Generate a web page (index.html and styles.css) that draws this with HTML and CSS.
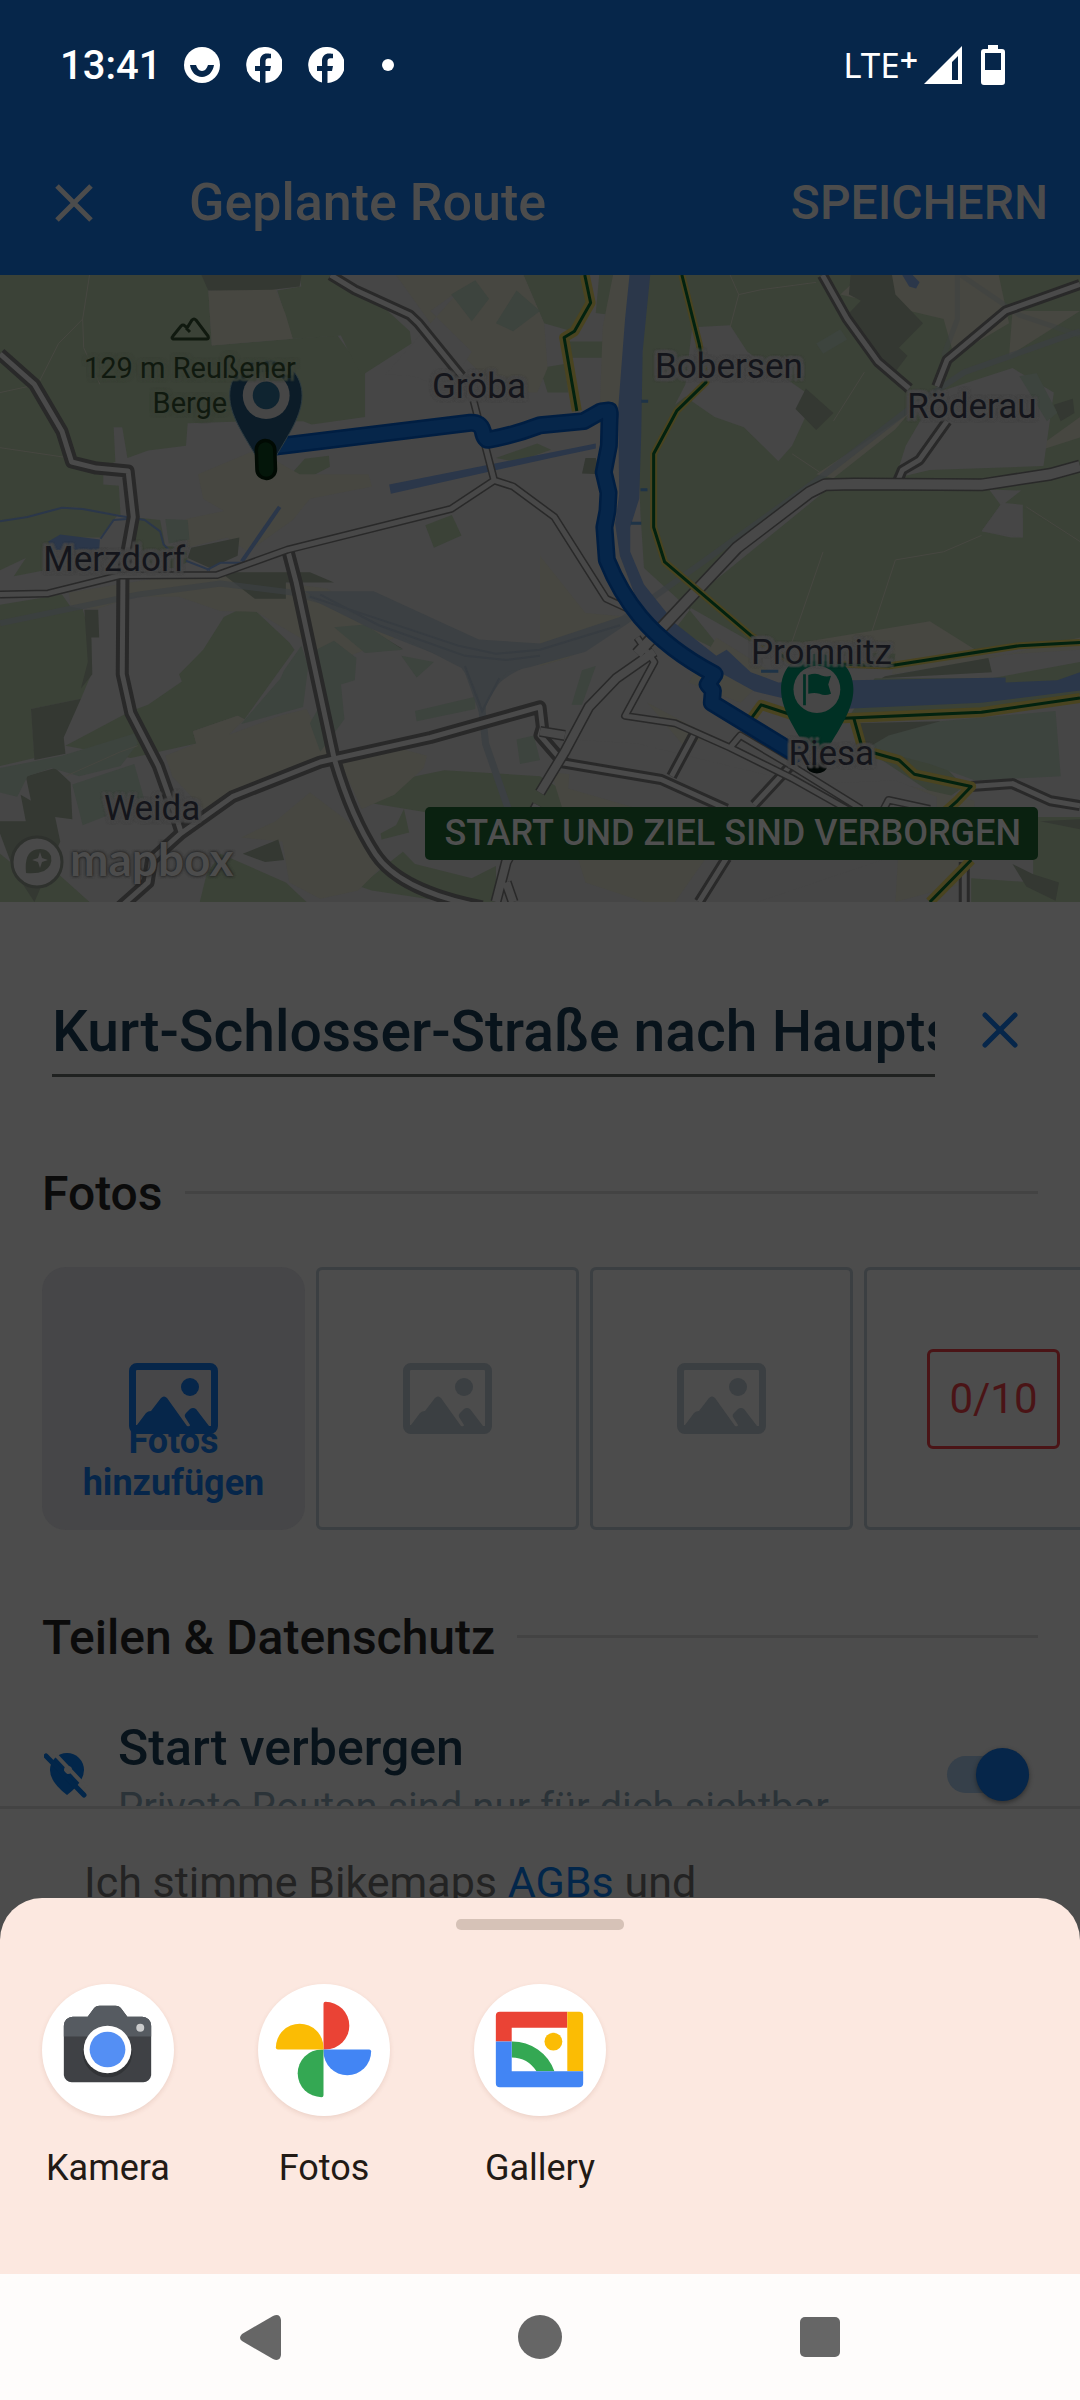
FILE: index.html
```html
<!DOCTYPE html>
<html lang="de">

<head>
    <meta charset="UTF-8">
    <meta name="viewport" content="width=device-width, initial-scale=1.0">
    <title>Geplante Route</title>
    <link rel="stylesheet" href="styles.css">
</head>

<body>
    <!-- icons used more than once -->
    <svg class="defs" aria-hidden="true">
        <symbol id="facebook" viewBox="0 0 36 36">
            <path d="M18 0a18 18 0 0 0-4 35.500V24H9v-5h5v-5c0-5 3-7.500 7-7.500 2 0 4 .3 4 .3v4.500h-2.500c-2.500 0-3 1.500-3 3V19h5.500l-1 5h-4.500v12A18 18 0 0 0 18 0z" fill="#fff" />
        </symbol>
        <symbol id="picture" viewBox="0 0 89 71">
            <path fill-rule="evenodd" d="M8 0h73a8 8 0 0 1 8 8v55a8 8 0 0 1-8 8H8a8 8 0 0 1-8-8V8a8 8 0 0 1 8-8zM7 8v54l1 0 9-12q2-2 5-2l10-13q3-3 6 0l20 28q3 1 3-1l-5-8q-1-2 1-4l4-4q3-2 6 0l13 17h2V8q0-1-1-1H8q-1 0-1 1z" />
            <ellipse cx="61" cy="24" rx="9" ry="9" />
        </symbol>
    </svg>

    <div class="app">
        <div class="status">
            <span class="clock">13:41</span>
            <div class="notifications">
                <svg width="36" height="36" viewBox="0 0 36 36"><circle cx="18" cy="18" r="18" fill="#fff" /><path d="M6 18h6c1 3 3 6 6 6s5-3 6-6h6c-1 7-6 12-12 12S7 25 6 18z" fill="#06264a" /></svg>
                <svg width="36" height="36"><use href="#facebook" /></svg>
                <svg width="36" height="36"><use href="#facebook" /></svg>
                <svg width="36" height="36" viewBox="0 0 36 36"><circle cx="18" cy="18" r="6" fill="#fff" /></svg>
            </div>
            <span class="network">LTE<sup>+</sup></span>
            <svg class="signal" width="38" height="38" viewBox="0 0 38 38"><path fill-rule="evenodd" d="M38 0v38H0zM34 10l-6 6v18h6z" fill="#fff" /></svg>
            <svg width="24" height="40" viewBox="0 0 24 40"><path fill-rule="evenodd" d="M7 0h10v4h4a3 3 0 0 1 3 3v30a3 3 0 0 1-3 3H3a3 3 0 0 1-3-3V7a3 3 0 0 1 3-3h4zM4 8v17h16V8z" fill="#fff" /></svg>
        </div>

        <header class="toolbar">
            <button class="icon-btn" aria-label="Schließen">
                <svg width="38" height="38" viewBox="0 0 38 38"><path d="M2 2l34 34M36 2L2 36" stroke="#4c4c4c" stroke-width="5" /></svg>
            </button>
            <h1>Geplante Route</h1>
            <button class="save">SPEICHERN</button>
        </header>

        <div class="map">
            <svg class="map-canvas" viewBox="0 12 3136 1536" preserveAspectRatio="none">
                <!-- fields -->
                <g fill="#3b4237">
                    <path d="M0 12H590L605 50 615 185 850 168 980 160 1010 195 1060 250 1060 360 905 378 880 370 720 370 545 375 540 430 430 442 370 460 355 385 330 385 335 470 300 480 300 525 345 528 350 600 210 580 0 615z" />
                    <path d="M0 612L200 580 340 602 290 655 170 655 145 670 130 735 40 750 75 705 0 735z" />
                    <path d="M380 605L465 612 480 675 540 680 545 715 510 730 400 730z" />
                    <path d="M0 820L180 795 205 825 240 830 265 905 265 990 235 1050 90 1075 100 1195 0 1215z" />
                    <path d="M520 990L590 930 650 850 690 833 745 837 840 912 855 930 710 1100 690 1092 560 1130 570 1160 380 1195 190 1165 380 1080 430 1065 528 1008z" />
                    <path d="M805 50L875 40 870 12H960L1100 80 1190 150 1195 180 1050 258 1010 195 990 160 850 168z" />
                    <path d="M1150 1250L1290 1225 1568 1240 1740 1330V1430L1568 1400 1400 1370 1250 1330 1070 1305 1145 1285z" />
                    <path d="M640 1430L830 1500 890 1548H580L600 1480z" />
                    <path d="M1105 1380L1150 1360 1173 1320 1188 1378 1108 1395zM1045 1510L1110 1465 1170 1425 1205 1455 1370 1490 1440 1460V1548H1300L1080 1520z" />
                    <path d="M850 495L885 462 955 455 958 482 875 518zM668 562L740 545 747 573 670 598zM1235 625L1312 600 1340 650 1260 680z" />
                    <path d="M1520 12H1710L1720 90 1660 150 1580 130zM1740 12H1790L1775 110 1730 105zM1655 175H1765V215H1660zM1568 240L1640 230 1650 300 1590 300z" />
                    <path d="M1880 12H3136V680L2905 580 2965 540 2620 530 2395 520 2140 680 1960 880 2105 940 2000 830 1870 730 1860 600 1850 400z" />
                    <path d="M2405 535H2870L2905 575 2850 640 2935 655 2970 655V580L3136 665V910L2600 960 2200 920 1990 820z" />
                    <path d="M2540 1000H2880L3136 960V1040L2850 1080 2460 1100zM2700 1180L2800 1265 2740 1300 2560 1200zM3000 1340H3136V1548H2820V1490L3000 1500z" />
                    <path d="M1440 460L1560 425 1600 440 1500 470zM0 1430L60 1470 170 1480 260 1548H0z" />
                </g>
                <!-- open land -->
                <g fill="#474741">
                    <path d="M605 50L800 45 830 110 850 168 615 185zM575 500L745 440 870 500 1070 500 1080 530 900 560 850 612 720 690 660 655 545 680 540 610 650 590 590 560z" />
                    <path d="M200 790L560 740 950 780 1150 900 970 960 870 900 790 860 745 837 640 835 520 800 390 800 280 830 205 825z" />
                    <path d="M560 1130L690 1092 710 1100 665 1138 820 1090 890 1075 960 1190 680 1300 590 1320 500 1240 480 1190 570 1160z" />
                    <path d="M980 1190L1130 1165 1240 1190 1230 1220 1145 1285 1050 1320zM700 1390L800 1350 900 1280 1010 1350 1110 1460 1040 1520 930 1540 840 1500 820 1400z" />
                    <path d="M1150 12L1520 12 1580 130 1590 240 1560 300 1440 300 1380 240 1250 130zM1780 12H1840L1800 350 1740 380 1750 140z" />
                    <path d="M1568 700L1700 840 1830 850 1650 950 1568 970z" />
                    <path d="M2080 900L2240 985 2150 1060 2000 1010zM1880 1060L2060 1140 1990 1170z" />
                    <path d="M1600 1230L1930 1260 2100 1330 2050 1548H1870L1700 1500z" />
                    <path d="M2440 60L2500 12H2900L2930 130 2770 210 2740 120zM2940 100L3136 100 2930 210zM3020 430L3136 360V410L3025 440z" />
                    <path d="M2370 500L2640 350 2600 390 2420 510zM2230 980L2140 870 2200 940zM2620 1260L2830 1300 2810 1500 2600 1548z" />
                    <path d="M2700 860L2200 930 2600 940 2590 990 2880 950 3136 900V930L2860 945z" />
                </g>
                <!-- built-up areas -->
                <g fill="#464646">
                    <path d="M2010 140L2120 135 2170 200 2340 300 2355 330 2300 430 2260 468 2160 385 2075 360 1990 310 1960 330 1990 280zM2720 300L2940 240 3060 300 3030 480 2700 490 2600 510 2630 430z" />
                    <path d="M1340 45L1250 100 1370 200 1300 290 1200 260 1120 255 1230 150zM2850 640L2910 570 2970 575V655z" />
                    <path d="M1660 1150L1850 1160 2340 1260 2600 1250 2720 1290 2720 1400 2200 1548H1960L2100 1380 1650 1270z" />
                </g>
                <!-- woods -->
                <g fill="#343832">
                    <path d="M585 12H875L870 40 790 48 605 50zM90 1075L235 1050 185 1145 190 1185 100 1200zM75 1240L160 1220 205 1255 210 1345 160 1340 175 1400 100 1548 40 1470 0 1380V1350L75 1350 60 1285 90 1300zM245 832L285 832 288 900 265 900 268 990 235 1025 255 960zM555 680L695 655 690 700 610 730 545 705zM640 740L900 740 970 765 830 765 830 805 740 805zM1070 878L1170 928 1060 905zM705 1430L808 1395 825 1445 770 1450z" />
                    <path d="M2470 12H2590L2600 60 2680 130 2610 190 2635 210 2590 260 2500 180 2460 110 2500 75 2465 60zM2340 290L2420 350 2370 392 2310 340zM2570 995L2870 950 2880 985 2560 1000zM2480 1110L2730 1105 2680 1160 2520 1170zM2940 1455L3000 1480 3075 1500 3065 1545 2980 1510zM3020 1350L3136 1345V1370zM1700 460L1730 460 1740 500 1690 498zM3060 330L3115 315 3120 350 3080 370z" />
                </g>
                <!-- parks -->
                <g fill="#3d443e">
                    <path d="M970 875L1060 868 1170 930 1060 938zM825 980L875 920 895 970 880 1070 700 1112 815 1000zM895 940L970 908 1035 950 1030 1005 990 1015 1000 1100 930 1180 900 1110 940 1050zM1165 945L1260 960 1210 998zM1205 1080L1380 1045 1380 1075 1210 1105zM0 1220L180 1190 390 1135 400 1160 350 1215 230 1240 150 1220 80 1240 50 1290 0 1280zM210 1260L390 1210 420 1300 240 1360zM480 610L545 612 550 660 490 670zM1310 60L1380 25 1420 70 1370 125zM1440 130L1500 50 1568 100 1490 150zM1500 1150L1550 1140 1568 1200 1510 1210z" />
                    <path d="M2370 180L2440 145 2460 170 2390 205zM2580 1140L2730 1105 3065 1080 3080 1240 2830 1250 2700 1210 2520 1170zM2960 260L3010 252 3070 350 3040 370zM1690 980L1730 970 1690 1065 1660 1065z" />
                </g>
                <!-- railway yard -->
                <g fill="none" stroke="#3c4043">
                    <path d="M0 865L400 795 640 768 850 790 1100 850 1400 935 1600 935 1800 860 2000 740 2380 510 2640 340 2800 250 3136 150" stroke-width="6" opacity=".7" />
                    <path d="M900 795L1080 870 1350 960 1400 1080" stroke-width="7" />
                    <path d="M1400 1080L1410 1160 1480 1330M1400 1080Q1400 1010 1520 965" stroke-width="7" />
                    <path d="M2780 12L2780 120 2740 210M2790 12L2960 110 3136 160" stroke-width="5" opacity=".4" />
                </g>
                <path d="M880 787H1085L1390 905 1568 915 1800 850 1860 845 1700 935 1540 972 1470 985 1420 1050 1400 1085 1385 1030 1340 975 1100 870z" fill="#3c4043" />
                <path d="M900 800L1100 855 1330 920 1440 940 1568 930 1800 870M930 795L1100 870 1350 945 1470 955 1568 945M1350 970L1400 1080 1450 1000" fill="none" stroke="#373c41" stroke-width="2" />
                <!-- tracks -->
                <g fill="none" stroke="#474741" stroke-width="1">
                    <path d="M260 12L240 120 170 180 110 280 0 300M240 120L243 190 290 280M0 435L200 460M190 1240L350 1180 400 1165" />
                    <path d="M2145 60L2210 48 2370 30M2145 60L2120 140M2145 60L2120 12M2600 710L2740 690 2850 650M2600 710L2530 890M2390 690L2300 910M2300 450L2380 495" />
                    <path d="M2420 370L2510 250M3136 665L2980 580" />
                </g>
                <!-- water -->
                <g fill="#2b374a">
                    <path d="M1828 12H1888L1866 200 1862 400 1856 560 1830 630 1830 690 1870 770 1960 865 2080 945 2110 930 2180 985 2260 1010 2470 1005 2920 998 2920 1010 3070 1005 3136 985V1030L2850 1060 2440 1075 2280 1050 2190 1032 2090 985 1950 920 1850 810 1800 700 1786 620 1798 550 1795 340 1815 120z" />
                    <path d="M1130 525L1730 425V437L1600 460 1135 548zM140 665L175 648 290 660 288 685 150 685zM2620 12H2650L2670 30 2660 45 2640 40z" />
                </g>
                <path d="M0 615L80 605 180 582 240 585 345 602 420 612 465 640 475 672 490 685M292 658L330 612 370 610M600 735L640 717 700 717M540 712L610 735" fill="none" stroke="#2b374a" stroke-width="2" />
                <path d="M702 714L812 580" fill="none" stroke="#2b374a" stroke-width="4" />
                <path d="M1862 321H1882M1860 538H1880M1832 620H1862M2210 983H2260" stroke="#1e3347" stroke-width="3" />
                <!-- roads: casing first, then surface -->
                <g fill="none" stroke-linejoin="round">
                    <g stroke="#292929" stroke-width="13">
                        <path d="M0 205L100 280 180 395 208 470 280 485 372 492 387 605 357 745 355 990 380 1085 460 1215 500 1310 525 1375" />
                        <path d="M835 685L860 765 920 1000 970 1195Q1020 1340 1090 1430 1160 1520 1400 1560" />
                        <path d="M350 1560L430 1500 440 1445 525 1380 675 1290 930 1205 1250 1145 1568 1070 1575 1120 1568 1140 1640 1210" />
                        <path d="M960 12L1030 48 1190 110 1215 130 1340 260" stroke-width="11" />
                        <path d="M2388 12L2460 120 2550 225 2640 290M3136 35L2920 100 2750 220 2720 285M2750 370L2670 465 2620 490 2605 520" stroke-width="11" />
                        <path d="M1620 1205L1920 1248 2110 1320M1950 1240L2020 1130M2190 1310L2300 1210M2820 1265L2940 1258 3050 1300 3136 1312M2110 1440L2030 1548M2800 1450V1548" stroke-width="11" />
                    </g>
                    <g stroke="#4a4a4a" stroke-width="5">
                        <path d="M0 205L100 280 180 395 208 470 280 485 372 492 387 605 357 745 355 990 380 1085 460 1215 500 1310 525 1375" />
                        <path d="M835 685L860 765 920 1000 970 1195Q1020 1340 1090 1430 1160 1520 1400 1560" />
                        <path d="M350 1560L430 1500 440 1445 525 1380 675 1290 930 1205 1250 1145 1568 1070 1575 1120 1568 1140 1640 1210" />
                        <path d="M960 12L1030 48 1190 110 1215 130 1340 260" />
                        <path d="M2388 12L2460 120 2550 225 2640 290M3136 35L2920 100 2750 220 2720 285M2750 370L2670 465 2620 490 2605 520" />
                        <path d="M1620 1205L1920 1248 2110 1320M1950 1240L2020 1130M2190 1310L2300 1210M2820 1265L2940 1258 3050 1300 3136 1312M2110 1440L2030 1548M2800 1450V1548" />
                    </g>
                    <g stroke="#292929" stroke-width="8">
                        <path d="M0 795L140 792 350 748 630 747 835 685 1310 585 1435 515 1375 320M1435 515L1490 530 1610 605 1760 805 1850 840M1850 900L1900 960 1815 1092 1960 1110 2120 1170 2300 1245 2500 1340M2120 1170L2150 1140 2300 1215 2500 1320M2560 1330L2580 1298 2700 1320" />
                        <path d="M1568 1280L1640 1180 1710 1070 1790 1000 1900 935M1560 1310L1470 1450 1440 1548M1470 1500L1490 1548M1568 1130L1640 1140" stroke-width="11" />
                        <path d="M1850 940L2140 680 2350 545 2395 526 2480 524 2850 526 3050 500 3136 480" stroke-width="13" />
                    </g>
                    <g stroke="#484848" stroke-width="5">
                        <path d="M0 795L140 792 350 748 630 747 835 685 1310 585 1435 515 1375 320M1435 515L1490 530 1610 605 1760 805 1850 840M1850 900L1900 960 1815 1092 1960 1110 2120 1170 2300 1245 2500 1340M2120 1170L2150 1140 2300 1215 2500 1320M2560 1330L2580 1298 2700 1320" />
                        <path d="M1568 1280L1640 1180 1710 1070 1790 1000 1900 935M1560 1310L1470 1450 1440 1548M1470 1500L1490 1548M1568 1130L1640 1140" stroke-width="8" />
                        <path d="M1850 940L2140 680 2350 545 2395 526 2480 524 2850 526 3050 500 3136 480" stroke-width="10" />
                    </g>
                    <!-- cycle paths -->
                    <g stroke="#4a4420" stroke-width="10">
                        <path d="M1698 12L1715 80 1668 150 1638 165 1675 345" />
                        <path d="M1980 12L2030 180 2050 275 1965 345 1898 450V630L1930 715 2180 895 2300 960 2580 970 2960 920 3136 912" stroke-width="7" />
                        <path d="M2180 1100L2210 1065 2300 1090 2450 1098 2850 1083 3136 1048M2480 1100L2505 1175 2610 1200 2655 1235 2820 1265 2780 1300 2740 1330M2820 1445L2700 1548" />
                    </g>
                    <g stroke="#02220f" stroke-width="3">
                        <path d="M1698 12L1715 80 1668 150 1638 165 1675 345M1980 12L2030 180 2050 275 1965 345 1898 450V630L1930 715 2180 895 2300 960 2580 970 2960 920 3136 912" />
                        <path d="M2180 1100L2210 1065 2300 1090 2450 1098 2850 1083 3136 1048M2480 1100L2505 1175 2610 1200 2655 1235 2820 1265 2780 1300 2740 1330M2820 1445L2700 1548" />
                    </g>
                </g>
                <!-- planned route -->
                <g fill="none" stroke-linejoin="round" stroke-linecap="round">
                    <path stroke="#001e42" stroke-width="18" d="M800 432L1365 374Q1395 372 1402 395 1407 418 1420 415 1490 405 1568 380L1695 370 1745 346 1768 344Q1772 344 1770 365L1768 430 1753 495 1767 545 1764 590 1755 630 1762 710Q1800 790 1860 850 1940 930 2075 990L2055 1015 2070 1030 2067 1060 2310 1185" />
                    <path stroke="#06264a" stroke-width="13" d="M800 432L1365 374Q1395 372 1402 395 1407 418 1420 415 1490 405 1568 380L1695 370 1745 346 1768 344Q1772 344 1770 365L1768 430 1753 495 1767 545 1764 590 1755 630 1762 710Q1800 790 1860 850 1940 930 2075 990L2055 1015 2070 1030 2067 1060 2310 1185" />
                </g>
                <!-- start and finish pins -->
                <ellipse cx="2372" cy="1215" rx="30" ry="18" fill="#020806" />
                <path d="M773 221C840 221 877 260 877 307 877 355 840 400 800 458Q773 490 745 458C705 400 667 355 667 307 667 260 705 221 773 221z" fill="#0c1c28" stroke="#2c3a40" stroke-width="1" />
                <ellipse cx="773" cy="307" rx="68" ry="58" fill="#464646" />
                <ellipse cx="773" cy="307" rx="39" ry="34" fill="#0f2430" />
                <path d="M771 440L773 488" stroke="#010a03" stroke-width="22" stroke-linecap="round" />
                <path d="M771 440L773 488" stroke="#04160a" stroke-width="15" stroke-linecap="round" />
                <path d="M2372 940C2440 940 2478 980 2478 1027 2478 1075 2440 1120 2405 1170Q2372 1205 2340 1170C2305 1120 2268 1075 2268 1027 2268 980 2305 940 2372 940z" fill="#003024" />
                <ellipse cx="2372" cy="1027" rx="68" ry="58" fill="#464646" />
                <path d="M2332 990H2340V1066H2332zM2347 992Q2370 985 2385 993 2400 998 2413 994L2405 1015 2413 1038Q2395 1044 2380 1038 2365 1034 2347 1038z" fill="#003024" />
            </svg>

            <div class="place peak">
                <svg width="40" height="24" viewBox="0 0 40 24"><path d="M3 22Q1 21 3 19L11 9q2-2 4 0l2 2 5-8q2-2 4 0L38 19q1 3-1 3zM16 11l4 4" fill="none" stroke="#10190f" stroke-width="3" /></svg>
                129 m Reußener<br>Berge
            </div>
            <span class="place groeba">Gröba</span>
            <span class="place bobersen">Bobersen</span>
            <span class="place roederau">Röderau</span>
            <span class="place merzdorf">Merzdorf</span>
            <span class="place promnitz">Promnitz</span>
            <span class="place riesa">Riesa</span>
            <span class="place weida">Weida</span>

            <div class="mapbox">
                <svg width="54" height="54" viewBox="0 0 54 54"><circle cx="27" cy="27" r="25" fill="#494949" stroke="#2e312d" stroke-width="3" /><path d="M16 38Q14 17 26 14.500 37 12 41 21 43 31 34 36 27 39 16 38z" fill="#30342e" /><path d="M30 17l2 6 6 2-6 2-2 6-2-6-6-2 6-2z" fill="#494949" /></svg>
                <span>mapbox</span>
            </div>
            <span class="hidden-badge">START UND ZIEL SIND VERBORGEN</span>
        </div>

        <main class="content">
            <div class="name-row">
                <input type="text" class="route-name" aria-label="Name der Route" value="Kurt-Schlosser-Straße nach Hauptstraße">
                <button class="icon-btn" aria-label="Name löschen">
                    <svg width="36" height="36" viewBox="0 0 36 36"><path d="M3 3l30 30M33 3L3 33" stroke="#06264a" stroke-width="5" stroke-linecap="round" /></svg>
                </button>
            </div>

            <h2>Fotos</h2>
            <div class="photos">
                <button class="photo add">
                    <svg width="89" height="71"><use href="#picture" /></svg>
                    <span>Fotos<br>hinzufügen</span>
                </button>
                <div class="photo"><svg width="89" height="71"><use href="#picture" /></svg></div>
                <div class="photo"><svg width="89" height="71"><use href="#picture" /></svg></div>
                <div class="photo"><span class="count">0/10</span></div>
            </div>

            <h2>Teilen &amp; Datenschutz</h2>
            <div class="setting">
                <svg class="setting-icon" width="44" height="46" viewBox="0 0 44 46">
                    <path d="M23 1a17 17 0 0 1 17 17q0 12-17 25Q6 30 6 18A17 17 0 0 1 23 1z" fill="#02264a" />
                    <circle cx="24" cy="18" r="4" fill="#4c4c4c" />
                    <path d="M10 1l32 34" stroke="#4c4c4c" stroke-width="4" />
                    <path d="M2 4l38 39" stroke="#02264a" stroke-width="5" stroke-linecap="round" />
                </svg>
                <label for="hideStart">
                    <strong>Start verbergen</strong>
                    <span>Private Routen sind nur für dich sichtbar.</span>
                </label>
                <input type="checkbox" id="hideStart" class="switch" checked>
            </div>
        </main>

        <footer class="consent">Ich stimme Bikemaps <a href="#">AGBs</a> und</footer>

        <section class="sheet">
            <div class="handle"></div>
            <div class="apps">
                <button class="app-btn">
                    <svg class="app-icon" viewBox="0 0 133 133">
                        <path d="M22 92V42a9 9 0 0 1 9-9h15l6-8q2-3 6-3h16q4 0 6 3l6 8h15a9 9 0 0 1 9 9v50a8 8 0 0 1-8 7H30a8 8 0 0 1-8-7z" fill="#3f4145" />
                        <path d="M22 53V42a9 9 0 0 1 9-9h15l6-8q2-3 6-3h16q4 0 6 3l6 8h15a9 9 0 0 1 9 9v11z" fill="#565b61" />
                        <circle cx="66" cy="69" r="25" fill="#323437" />
                        <circle cx="66" cy="66" r="24" fill="#fff" />
                        <circle cx="66" cy="66" r="18" fill="#548ff4" />
                        <circle cx="99" cy="44" r="4" fill="#cacbcc" />
                    </svg>
                    Kamera
                </button>
                <button class="app-btn">
                    <svg class="app-icon" viewBox="0 0 133 133">
                        <path d="M66 66V20q0-2 2-2a24 24 0 0 1 0 48z" fill="#ea4335" />
                        <path d="M66 66h46q2 0 2 2a24 24 0 0 1-48 0z" fill="#4285f4" />
                        <path d="M66 66v46q0 2-2 2a24 24 0 0 1 0-48z" fill="#34a853" />
                        <path d="M66 66H20q-2 0-2-2a24 24 0 0 1 48 0z" fill="#fbbc04" />
                    </svg>
                    Fotos
                </button>
                <button class="app-btn">
                    <svg class="app-icon" viewBox="0 0 133 133">
                        <path d="M22 58V32q0-4 4-4h68v16H38v14z" fill="#ea4335" />
                        <path d="M94 28h12q4 0 4 4v56H94z" fill="#fbbc04" />
                        <path d="M38 58a45 45 0 0 1 43 30H63a30 30 0 0 0-25-14z" fill="#34a853" />
                        <path d="M22 58h16v30h72v12q0 4-4 4H26q-4 0-4-4z" fill="#4285f4" />
                        <circle cx="80" cy="58" r="9" fill="#fbbc04" />
                    </svg>
                    Gallery
                </button>
            </div>
        </section>

        <nav class="navbar">
            <button aria-label="Zurück"><svg width="41" height="45" viewBox="0 0 41 45"><path d="M2 19L33 1q7-3 8 4v35q-1 7-8 4L2 26q-4-3 0-7z" fill="#666" /></svg></button>
            <button aria-label="Startseite"><svg width="45" height="45" viewBox="0 0 45 45"><circle cx="22" cy="22" r="22" fill="#666" /></svg></button>
            <button aria-label="Übersicht"><svg width="40" height="40" viewBox="0 0 40 40"><rect width="40" height="40" rx="5" fill="#666" /></svg></button>
        </nav>
    </div>
</body>

</html>
```
FILE: styles.css
```css
/* Base styles */
* {
    box-sizing: border-box;
}

body {
    margin: 0;
    font-family: Roboto, "Liberation Sans", sans-serif;
    background-color: #4c4c4c;
}

button {
    border: none;
    padding: 0;
    background: none;
    font-family: inherit;
    cursor: pointer;
}

svg {
    display: block;
    flex: none;
}

.defs {
    position: absolute;
    width: 0;
    height: 0;
}

.app {
    display: flex;
    flex-direction: column;
    height: 100vh;
    overflow: hidden;
}

/* Status bar and toolbar */
.status {
    display: flex;
    align-items: center;
    flex: none;
    height: 130px;
    padding: 0 75px 0 60px;
    background-color: #06264a;
    color: #fff;
}

.clock {
    width: 124px;
    font-size: 40px;
    font-weight: 500;
}

.notifications {
    display: flex;
    flex: 1;
    gap: 26px;
}

.network {
    font-family: "Noto Sans", sans-serif;
    font-size: 35px;
    font-weight: 400;
    line-height: 40px;
}

.network sup {
    font-size: 32px;
    font-weight: 600;
    line-height: 0;
    vertical-align: 6px;
}

.signal {
    margin: 0 19px 0 6px;
}

.toolbar {
    display: flex;
    align-items: center;
    flex: none;
    height: 145px;
    padding: 0 32px 0 55px;
    background-color: #06264a;
    color: #4c4c4c;
}

.toolbar h1 {
    flex: 1;
    margin: 0 0 0 96px;
    font-size: 52px;
    font-weight: 500;
}

.save {
    color: #4c4c4c;
    font-size: 48px;
    font-weight: 500;
}

/* Map */
.map {
    position: relative;
    flex: none;
    height: 627px;
    overflow: hidden;
    background-color: #464646;
}

.map-canvas {
    width: 100%;
    height: 100%;
}

.map-canvas * {
    vector-effect: non-scaling-stroke;
}

.place {
    position: absolute;
    color: #14151b;
    font-size: 35px;
    line-height: 40px;
    white-space: nowrap;
    text-shadow: 0 0 4px #464646, 0 0 4px #464646, 3px 3px 2px #464646, -3px -3px 2px #464646, 3px -3px 2px #464646, -3px 3px 2px #464646;
}

.peak {
    left: 84px;
    top: 42px;
    color: #10190f;
    font-size: 29px;
    line-height: 35px;
    text-align: center;
    text-shadow: 0 0 4px #3b4237, 3px 3px 2px #3b4237, -3px -3px 2px #3b4237, 3px -3px 2px #3b4237, -3px 3px 2px #3b4237;
}

.peak svg {
    margin: 0 auto 10px;
}

.groeba {
    left: 40%;
    top: 92px;
}

.bobersen {
    left: 655px;
    top: 72px;
}

.roederau {
    left: 84%;
    top: 112px;
}

.merzdorf {
    left: 4%;
    top: 265px;
}

.promnitz {
    left: 751px;
    top: 358px;
}

.riesa {
    left: 73%;
    top: 459px;
}

.weida {
    left: 104px;
    top: 514px;
}

.mapbox {
    position: absolute;
    left: 10px;
    bottom: 10px;
    display: flex;
    align-items: center;
    gap: 6px;
    color: #4c4c4c;
    font-family: Lato, sans-serif;
    font-size: 46px;
    font-weight: 700;
    line-height: 54px;
    text-shadow: 0 0 3px #222, 0 0 3px #222;
}

.mapbox span {
    padding-bottom: 6px;
}

.hidden-badge {
    position: absolute;
    right: 42px;
    bottom: 42px;
    padding: 0 17px 0 20px;
    border-radius: 5px;
    background-color: #0a2110;
    color: #4f4f4f;
    font-size: 36px;
    font-weight: 500;
    line-height: 53px;
}

/* Route form */
.content {
    flex: 1;
    min-height: 0;
    padding: 80px 42px 0;
    overflow: hidden;
}

.name-row {
    display: flex;
    align-items: center;
    gap: 47px;
    padding: 0 20px 0 10px;
}

.route-name {
    flex: 1;
    min-width: 0;
    height: 95px;
    padding: 6px 0 0;
    border: none;
    border-bottom: 3px solid #1f2120;
    border-radius: 0;
    background: none;
    color: #08131b;
    font-family: inherit;
    font-size: 57px;
    font-weight: 500;
}

h2 {
    display: flex;
    align-items: center;
    gap: 22px;
    margin: 88px 0 44px;
    color: #0b0b0b;
    font-size: 48px;
    font-weight: 500;
    line-height: 58px;
}

h2::after {
    content: "";
    flex: 1;
    height: 3px;
    margin-bottom: 4px;
    background-color: #434343;
}

.photos {
    display: flex;
    gap: 11px;
    margin-right: -42px;
    overflow: hidden;
}

.photo {
    display: flex;
    align-items: center;
    justify-content: center;
    flex: none;
    width: 263px;
    height: 263px;
    border: 3px solid #3b3f42;
    border-radius: 6px;
    fill: #3b3f42;
}

.add {
    position: relative;
    border: none;
    border-radius: 24px;
    background-color: #464648;
    color: #06264a;
    fill: #06264a;
    font-size: 36px;
    font-weight: 700;
    line-height: 42px;
}

/* caption lies over the lower edge of the icon */
.add span {
    position: absolute;
    bottom: 26px;
    left: 0;
    width: 100%;
    text-align: center;
}

.count {
    margin-right: 4px;
    padding: 0 19px;
    border: 3px solid #4a1416;
    border-radius: 6px;
    color: #4a1416;
    font-size: 42px;
    line-height: 94px;
}

.photos + h2 {
    margin: 79px 0 42px;
}

.setting {
    display: flex;
    align-items: flex-start;
    padding-right: 9px;
}

.setting-icon {
    margin: 43px 30px 0 2px;
}

.setting label {
    flex: 1;
    color: #2b3338;
    font-size: 40px;
    line-height: 50px;
    white-space: nowrap;
}

.setting strong,
.setting label span {
    display: block;
}

.setting strong {
    margin: 12px 0 8px;
    color: #08131b;
    font-size: 50px;
    font-weight: 500;
    line-height: 54px;
}

.switch {
    appearance: none;
    position: relative;
    width: 82px;
    height: 37px;
    margin: 47px 0 0;
    border-radius: 19px;
    background-color: #36404a;
}

.switch::after {
    content: "";
    position: absolute;
    right: 0;
    top: -8px;
    width: 53px;
    height: 53px;
    border-radius: 50%;
    background-color: #06264a;
    box-shadow: 0 2px 5px rgba(0, 0, 0, 0.4);
}

.consent {
    flex: none;
    height: 92px;
    padding: 46px 84px 0;
    border-top: 3px solid #434343;
    overflow: hidden;
    color: #232323;
    font-size: 43px;
    line-height: 54px;
}

.consent a {
    color: #02264a;
    text-decoration: none;
}

/* Bottom sheet */
.sheet {
    flex: none;
    height: 376px;
    padding-top: 21px;
    border-radius: 42px 42px 0 0;
    background-color: #fce8e0;
}

.handle {
    width: 168px;
    height: 11px;
    margin: 0 auto 54px;
    border-radius: 5px;
    background-color: #d6c2b7;
}

.apps {
    display: grid;
    grid-template-columns: repeat(5, 1fr);
}

.app-btn {
    display: flex;
    flex-direction: column;
    align-items: center;
    gap: 30px;
    color: #221a15;
    font-size: 36px;
    line-height: 44px;
}

.app-icon {
    width: 132px;
    height: 132px;
    border-radius: 50%;
    background-color: #fff;
    box-shadow: 0 2px 5px rgba(120, 60, 30, 0.12);
}

/* System navigation */
.navbar {
    display: grid;
    grid-template-columns: repeat(3, 280px);
    justify-content: center;
    flex: none;
    height: 126px;
    background-color: #fefcfb;
}

.navbar button {
    display: flex;
    align-items: center;
    justify-content: center;
}
```
